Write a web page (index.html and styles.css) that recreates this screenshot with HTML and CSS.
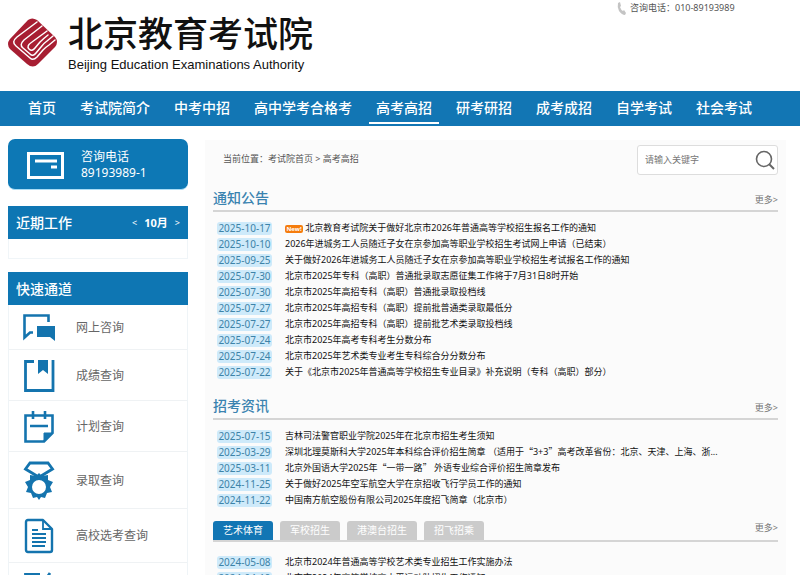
FILE: index.html
```html
<!DOCTYPE html>
<html lang="zh-CN">
<head>
<meta charset="utf-8">
<meta name="viewport" content="width=device-width, initial-scale=1">
<title>北京教育考试院 - 高考高招</title>
<link rel="stylesheet" href="styles.css">
</head>
<body>
<header class="top">
  <a class="brand" href="#">
    <svg class="brand-mark" viewBox="0 0 60 60" aria-hidden="true">
      <path fill="#a71e32" d="M23 8Q27 5 32 8L50 25Q54 30 50 35L33 52Q28 57 22 52L5 37Q1 32 5 27Z"/>
      <g fill="none" stroke="#fff" stroke-width="1.5" stroke-linecap="round" stroke-linejoin="round">
        <path d="M32 10L12 25Q6 30 11 34L25 46Q28 49 32 45L38 38Q41 35 44 33L50 28"/>
        <path d="M37 14L19 28Q14 33 18 36L25 42Q28 45 31 41L36 35Q39 31 42 29L48 24"/>
        <path d="M42 19L27 30Q21 34 24 37Q27 40 30 36L35 30Q38 27 43 23"/>
      </g>
    </svg>
    <span class="brand-text">
      <span class="brand-cn">北京教育考试院</span>
      <span class="brand-en">Beijing Education Examinations Authority</span>
    </span>
  </a>
  <p class="hotline">
    <svg width="10" height="13" viewBox="0 0 10 13" aria-hidden="true"><path fill="#c4c4c4" d="M1 1L3 0L4 4L3 5Q4 8 6 9L7 8L9 11L8 13Q5 13 2 9Q0 5 1 1Z"/></svg>
    咨询电话：010-89193989
  </p>
</header>
<nav class="nav">
  <a href="#">首页</a><a href="#">考试院简介</a><a href="#">中考中招</a><a href="#">高中学考合格考</a><a href="#" class="on">高考高招</a><a href="#">研考研招</a><a href="#">成考成招</a><a href="#">自学考试</a><a href="#">社会考试</a>
</nav>
<div class="page">
  <aside class="side">
    <div class="phone">
      <svg width="37" height="27" viewBox="0 0 37 27" fill="none" stroke="#fff" aria-hidden="true"><rect x="1.5" y="1.5" width="34" height="24" stroke-width="3"/><path d="M8 9H30M24 15H30" stroke-width="3"/></svg>
      <p>咨询电话<br>89193989-1</p>
    </div>
    <section class="panel">
      <div class="panel-head"><h2>近期工作</h2><div class="month"><button type="button" aria-label="上个月">&lt;</button><b>10月</b><button type="button" aria-label="下个月">&gt;</button></div></div>
      <div class="panel-empty"></div>
    </section>
    <section class="panel">
      <div class="panel-head"><h2>快速通道</h2></div>
      <ul class="quick">
        <li><a href="#"><svg width="32" height="27" viewBox="0 0 32 27" aria-hidden="true"><path fill="none" stroke="#1474ae" stroke-width="2.6" d="M25.500 8V1.500H1.500V23.500L7 18.500H10"/><path fill="#1474ae" d="M14 12H32V27L27 23H14Z"/></svg>网上咨询</a></li>
        <li><a href="#"><svg width="32" height="33" viewBox="0 0 32 33" aria-hidden="true"><path fill="none" stroke="#1474ae" stroke-width="2.8" d="M11 2.500H2.500V31.500H30V1"/><path fill="#1474ae" d="M15 1H25V15L20 11L15 15Z"/></svg>成绩查询</a></li>
        <li><a href="#"><svg width="32" height="33" viewBox="0 0 32 33" fill="none" stroke="#1474ae" aria-hidden="true"><path stroke-width="2.6" d="M21 31.500H2.500V5.500H29.500V23ZM10 1V9M22 1V9M7 16H25"/><path fill="#1474ae" d="M21 32V23H30Z"/></svg>计划查询</a></li>
        <li><a href="#"><svg width="32" height="39" viewBox="0 0 32 39" aria-hidden="true"><path fill="none" stroke="#1474ae" stroke-width="2.8" d="M14 15L2.500 8L7 2H25L29.500 8L18 15"/><path fill="#1474ae" fill-rule="evenodd" d="M16 12L19 15L25 14L25 19L30 21L27 26L29 31L24 32L22 37L18 36L16 39L14 36L10 37L8 32L3 31L5 26L2 21L7 19L7 14L13 15ZM16 19A7 7 0 1 0 16 33A7 7 0 1 0 16 19Z"/></svg>录取查询</a></li>
        <li><a href="#"><svg width="32" height="36" viewBox="0 0 32 36" fill="none" stroke="#1474ae" aria-hidden="true"><path stroke-width="2.4" stroke-linejoin="round" d="M5 2H20L29 11V32Q29 34 27 34H5Q3 34 3 32V4Q3 2 5 2Z"/><path stroke-width="1.8" d="M20 3V11H28M9 12H15M9 16H23M9 20H23M9 24H23M9 28H22"/></svg>高校选考查询</a></li>
        <li><a href="#"><svg width="32" height="33" viewBox="0 0 32 33" fill="none" stroke="#1474ae" aria-hidden="true"><path stroke-width="2.8" d="M17 2.500H2.500V31.500H28V18M27 1L14 20"/></svg>特殊类型查询</a></li>
      </ul>
    </section>
  </aside>
  <main class="main">
    <div class="bar">
      <p class="crumbs">当前位置：<a href="#">考试院首页</a> &gt; <a href="#">高考高招</a></p>
      <form class="search">
        <input type="text" placeholder="请输入关键字" aria-label="请输入关键字">
        <button type="button" aria-label="搜索"><svg width="20" height="20" viewBox="0 0 20 20" fill="none" stroke="#666" aria-hidden="true"><circle cx="9" cy="9" r="7.500" stroke-width="1.6"/><path stroke-width="2" d="M14 14L19 19"/></svg></button>
      </form>
    </div>
    <section class="block">
      <div class="block-head"><h2>通知公告</h2><a class="more" href="#">更多&gt;</a></div>
      <ul class="news">
        <li><time>2025-10-17</time><a href="#"><span class="new">New!</span> 北京教育考试院关于做好北京市2026年普通高等学校招生报名工作的通知</a></li>
        <li><time>2025-10-10</time><a href="#">2026年进城务工人员随迁子女在京参加高等职业学校招生考试网上申请（已结束）</a></li>
        <li><time>2025-09-25</time><a href="#">关于做好2026年进城务工人员随迁子女在京参加高等职业学校招生考试报名工作的通知</a></li>
        <li><time>2025-07-30</time><a href="#">北京市2025年专科（高职）普通批录取志愿征集工作将于7月31日8时开始</a></li>
        <li><time>2025-07-30</time><a href="#">北京市2025年高招专科（高职）普通批录取投档线</a></li>
        <li><time>2025-07-27</time><a href="#">北京市2025年高招专科（高职）提前批普通类录取最低分</a></li>
        <li><time>2025-07-27</time><a href="#">北京市2025年高招专科（高职）提前批艺术类录取投档线</a></li>
        <li><time>2025-07-24</time><a href="#">北京市2025年高考专科考生分数分布</a></li>
        <li><time>2025-07-24</time><a href="#">北京市2025年艺术类专业考生专科综合分分数分布</a></li>
        <li><time>2025-07-22</time><a href="#">关于《北京市2025年普通高等学校招生专业目录》补充说明（专科（高职）部分）</a></li>
      </ul>
    </section>
    <section class="block">
      <div class="block-head"><h2>招考资讯</h2><a class="more" href="#">更多&gt;</a></div>
      <ul class="news">
        <li><time>2025-07-15</time><a href="#">吉林司法警官职业学院2025年在北京市招生考生须知</a></li>
        <li><time>2025-03-29</time><a href="#">深圳北理莫斯科大学2025年本科综合评价招生简章 （适用于<span class="q">“</span>3+3<span class="q">”</span>高考改革省份：北京、天津、上海、浙...</a></li>
        <li><time>2025-03-11</time><a href="#">北京外国语大学2025年<span class="q">“</span>一带一路<span class="q">”</span> 外语专业综合评价招生简章发布</a></li>
        <li><time>2024-11-25</time><a href="#">关于做好2025年空军航空大学在京招收飞行学员工作的通知</a></li>
        <li><time>2024-11-22</time><a href="#">中国南方航空股份有限公司2025年度招飞简章（北京市）</a></li>
      </ul>
    </section>
    <section class="block">
      <div class="block-head tabs-head">
        <div class="tabs"><button type="button" class="on">艺术体育</button><button type="button">军校招生</button><button type="button">港澳台招生</button><button type="button">招飞招乘</button></div>
        <a class="more" href="#">更多&gt;</a>
      </div>
      <ul class="news">
        <li><time>2024-05-08</time><a href="#">北京市2024年普通高等学校艺术类专业招生工作实施办法</a></li>
        <li><time>2024-04-19</time><a href="#">北京市2024年高等学校高水平运动队招生工作通知</a></li>
      </ul>
    </section>
  </main>
</div>
</body>
</html>
```
FILE: styles.css
```css
* { box-sizing: border-box; margin: 0; padding: 0; }
html { scrollbar-width: none; }
body {
  background: #fff;
  color: #333;
  font-family: "Noto Sans", "Noto Sans CJK SC", sans-serif;
  font-size: 9px;
  line-height: 16px;
}
a { color: inherit; text-decoration: none; }
ul { list-style: none; }
button { border: 0; background: none; color: inherit; font: inherit; }
svg { display: block; flex: none; }

.top { display: flex; justify-content: space-between; align-items: flex-start; height: 91px; padding-left: 5px; }
.brand { display: flex; padding-top: 12px; gap: 3px; }
.brand-mark { width: 60px; height: 60px; }
.brand-text { display: flex; flex-direction: column; color: #111; }
.brand-cn { font-size: 35px; font-weight: 500; line-height: 44px; }
.brand-en { font-family: "Liberation Sans", Arial, sans-serif; font-size: 13px; line-height: 18px; }
.hotline { display: flex; align-items: center; gap: 3px; width: 183px; color: #555; }

.nav { display: flex; gap: 10px; height: 35px; padding: 0 21px; background: #1276b4; color: #fff; font-size: 14px; font-weight: 500; white-space: nowrap; }
.nav a { height: 33px; padding: 2px 7px 0; line-height: 30px; border-bottom: 2px solid transparent; }
.nav .on { border-color: #fff; }

.page { display: flex; align-items: flex-start; gap: 17px; padding: 13px 14px 0 8px; }
.side { flex: none; width: 180px; display: flex; flex-direction: column; }
.phone { display: flex; align-items: center; gap: 17px; height: 51px; padding: 2px 0 0 19px; margin-bottom: 16px; border-radius: 7px; border-bottom: 1px solid #a9dcf5; background: #0d78b5; color: #fff; font-size: 12px; line-height: 16px; }
.panel { margin-bottom: 13px; }
.panel-head { display: flex; align-items: center; justify-content: space-between; height: 33px; padding: 0 8px; background: #0e76b3; color: #fff; }
.panel-head h2 { font-size: 14px; font-weight: 500; }
.month { display: flex; gap: 7px; font-size: 11px; }
.month button { font-size: 9px; }
.panel-empty { height: 20px; border: 1px solid #f0f5f8; border-top: 0; }
.quick { border: 1px solid #eff4f7; border-top: 0; }
.quick a { display: flex; align-items: center; gap: 21px; padding: 9px 14px 8px; border-bottom: 1px solid #eff2f4; color: #666; font-size: 12px; }

.main { flex: 1; min-width: 0; padding: 0 8px 12px; margin-top: 1px; background: #fbfbfb; }
.bar { display: flex; justify-content: space-between; align-items: flex-start; height: 44px; padding: 5px 0 0 10px; }
.crumbs { padding-top: 6px; color: #555; }
.search { display: flex; align-items: center; width: 141px; height: 30px; padding: 0 2px 0 7px; border: 1px solid #ddd; border-radius: 3px; background: #fff; }
.search input { flex: 1; min-width: 0; border: 0; outline: 0; background: none; font: inherit; }
.search input::placeholder { color: #777; }

.block { margin-bottom: 12px; }
.block-head { display: flex; align-items: center; justify-content: space-between; height: 28px; margin-bottom: 8px; border-bottom: 2px solid #d5d5d5; }
.block-head h2 { padding-top: 2px; color: #3a83b0; font-size: 14px; font-weight: 500; }
.more { padding-top: 6px; color: #777; }
.news li { display: flex; align-items: center; gap: 13px; height: 16px; padding-left: 4px; white-space: nowrap; }
.news time { flex: none; width: 55px; border-radius: 3px; background: #ceeafa; color: #3d83a8; font-size: 10px; line-height: 13px; text-align: center; }
.news a { color: #111; }
.q { font-family: "Noto Sans CJK SC", sans-serif; }
.new { display: inline-block; width: 18px; vertical-align: middle; border-radius: 2px; background: #f57c0c; color: #fff; font-size: 6px; font-weight: 700; line-height: 8px; text-align: center; }
.tabs-head { align-items: flex-end; height: 22px; margin-bottom: 12px; }
.tabs-head .more { padding: 0 0 4px; }
.tabs { display: flex; gap: 7px; }
.tabs button { height: 19px; padding: 0 10px; border-radius: 3px 3px 0 0; background: #cbcbcb; color: #fff; font-size: 10px; line-height: 19px; }
.tabs .on { background: #1276b4; }
```
